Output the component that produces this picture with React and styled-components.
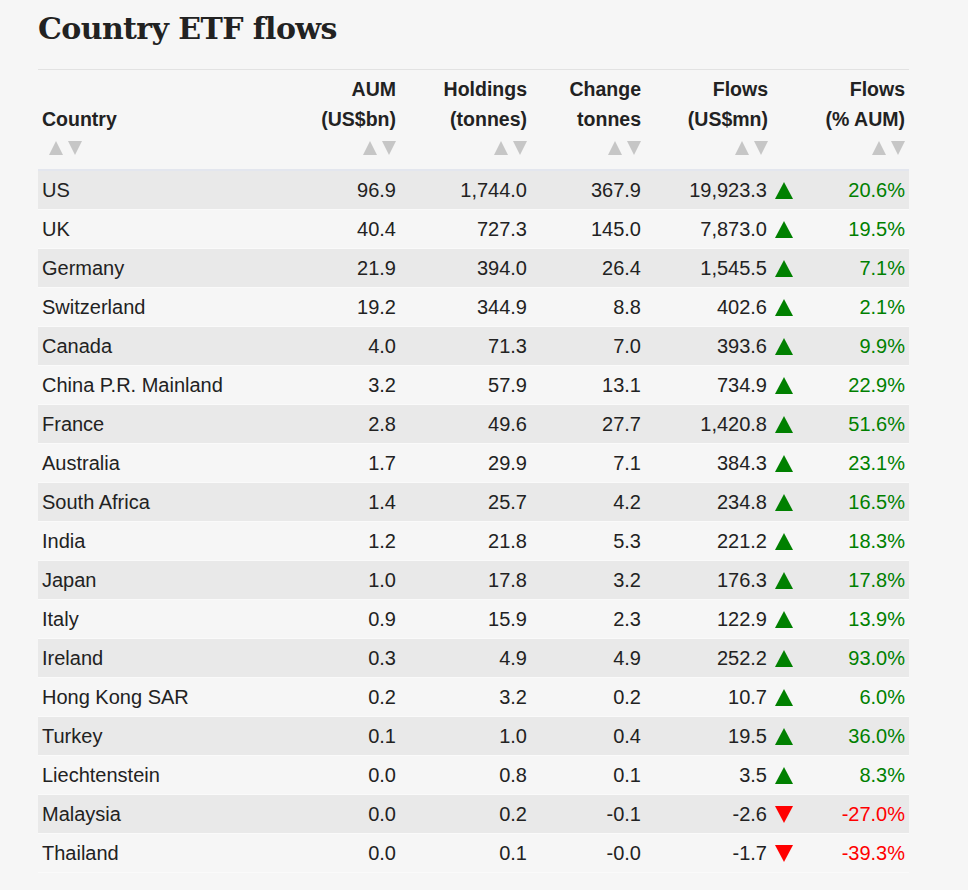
import React from "react";
import styled, { createGlobalStyle } from "styled-components";

const Global = createGlobalStyle`
  html, body { margin: 0; padding: 0; background: #f6f6f6; }
  body { font-family: "Liberation Sans", Arial, Helvetica, sans-serif; color: #222; }
`;

const Page = styled.div`
  padding: 8px 59px 18px 38px;
  width: 968px;
  box-sizing: border-box;
`;

const Title = styled.h1`
  margin: 0 0 19px 0;
  font-family: "DejaVu Serif", Georgia, serif;
  font-weight: 700;
  font-size: 30px;
  line-height: 42px;
  letter-spacing: -0.6px;
  color: #222;
`;

const Table = styled.table`
  width: 871px;
  border-collapse: collapse;
  border-top: 1px solid #e2e2e2;
  font-size: 20px;
  table-layout: fixed;
`;

const Col = styled.col`
  width: ${(p) => p.$w}px;
`;

const Th = styled.th`
  text-align: ${(p) => (p.$left ? "left" : "right")};
  vertical-align: bottom;
  font-weight: 700;
  font-size: 19.5px;
  line-height: 30px;
  padding: 4px ${(p) => (p.$pr ? p.$pr : 4)}px 7px 4px;
  border-bottom: 2px solid #e3e6ee;
  white-space: nowrap;
`;

const Sort = styled.div`
  display: flex;
  justify-content: ${(p) => (p.$left ? "flex-start" : "flex-end")};
  gap: 5px;
  height: 28px;
  align-items: center;
  padding-left: ${(p) => (p.$left ? 7 : 0)}px;
`;

const Tri = styled.span`
  width: 0;
  height: 0;
  border-left: 7.5px solid transparent;
  border-right: 7.5px solid transparent;
  ${(p) =>
    p.$down
      ? "border-top: 14px solid #c6c6c6;"
      : "border-bottom: 14px solid #c6c6c6;"}
`;

const Row = styled.tr`
  background: ${(p) => (p.$odd ? "#e9e9e9" : "#f6f6f6")};
  border-bottom: 1px solid #fafafa;
`;

const Td = styled.td`
  height: 38px;
  padding: 0 4px;
  text-align: ${(p) => (p.$left ? "left" : "right")};
  color: ${(p) => p.$color || "#222"};
  white-space: nowrap;
`;

const FlowCell = styled.span`
  display: inline-flex;
  align-items: center;
  gap: 8px;
`;

const Arrow = styled.span`
  width: 0;
  height: 0;
  border-left: 9px solid transparent;
  border-right: 9px solid transparent;
  ${(p) =>
    p.$down
      ? "border-top: 17px solid #ff0000;"
      : "border-bottom: 17px solid #008000;"}
`;

const data = [
  ["US", "96.9", "1,744.0", "367.9", "19,923.3", "20.6%"],
  ["UK", "40.4", "727.3", "145.0", "7,873.0", "19.5%"],
  ["Germany", "21.9", "394.0", "26.4", "1,545.5", "7.1%"],
  ["Switzerland", "19.2", "344.9", "8.8", "402.6", "2.1%"],
  ["Canada", "4.0", "71.3", "7.0", "393.6", "9.9%"],
  ["China P.R. Mainland", "3.2", "57.9", "13.1", "734.9", "22.9%"],
  ["France", "2.8", "49.6", "27.7", "1,420.8", "51.6%"],
  ["Australia", "1.7", "29.9", "7.1", "384.3", "23.1%"],
  ["South Africa", "1.4", "25.7", "4.2", "234.8", "16.5%"],
  ["India", "1.2", "21.8", "5.3", "221.2", "18.3%"],
  ["Japan", "1.0", "17.8", "3.2", "176.3", "17.8%"],
  ["Italy", "0.9", "15.9", "2.3", "122.9", "13.9%"],
  ["Ireland", "0.3", "4.9", "4.9", "252.2", "93.0%"],
  ["Hong Kong SAR", "0.2", "3.2", "0.2", "10.7", "6.0%"],
  ["Turkey", "0.1", "1.0", "0.4", "19.5", "36.0%"],
  ["Liechtenstein", "0.0", "0.8", "0.1", "3.5", "8.3%"],
  ["Malaysia", "0.0", "0.2", "-0.1", "-2.6", "-27.0%"],
  ["Thailand", "0.0", "0.1", "-0.0", "-1.7", "-39.3%"],
];

const headers = [
  { l1: "\u00a0", l2: "Country", w: 252, left: true },
  { l1: "AUM", l2: "(US$bn)", w: 110 },
  { l1: "Holdings", l2: "(tonnes)", w: 131 },
  { l1: "Change", l2: "tonnes", w: 114 },
  { l1: "Flows", l2: "(US$mn)", w: 152, pr: 29 },
  { l1: "Flows", l2: "(% AUM)", w: 112 },
];

export default function App() {
  return (
    <>
      <Global />
      <Page>
        <Title>Country ETF flows</Title>
        <Table>
          <colgroup>
            {headers.map((h, i) => (
              <Col key={i} $w={h.w} />
            ))}
          </colgroup>
          <thead>
            <tr>
              {headers.map((h, i) => (
                <Th key={i} $pr={h.pr} $left={h.left}>
                  <div>{h.l1}</div>
                  <div>{h.l2}</div>
                  <Sort $left={h.left}>
                    <Tri />
                    <Tri $down />
                  </Sort>
                </Th>
              ))}
            </tr>
          </thead>
          <tbody>
            {data.map((r, i) => {
              const neg = r[4].startsWith("-");
              return (
                <Row key={r[0]} $odd={i % 2 === 0}>
                  <Td $left>{r[0]}</Td>
                  <Td>{r[1]}</Td>
                  <Td>{r[2]}</Td>
                  <Td>{r[3]}</Td>
                  <Td>
                    <FlowCell>
                      {r[4]}
                      <Arrow $down={neg} />
                    </FlowCell>
                  </Td>
                  <Td $color={neg ? "#ff0000" : "#008000"}>{r[5]}</Td>
                </Row>
              );
            })}
          </tbody>
        </Table>
      </Page>
    </>
  );
}
